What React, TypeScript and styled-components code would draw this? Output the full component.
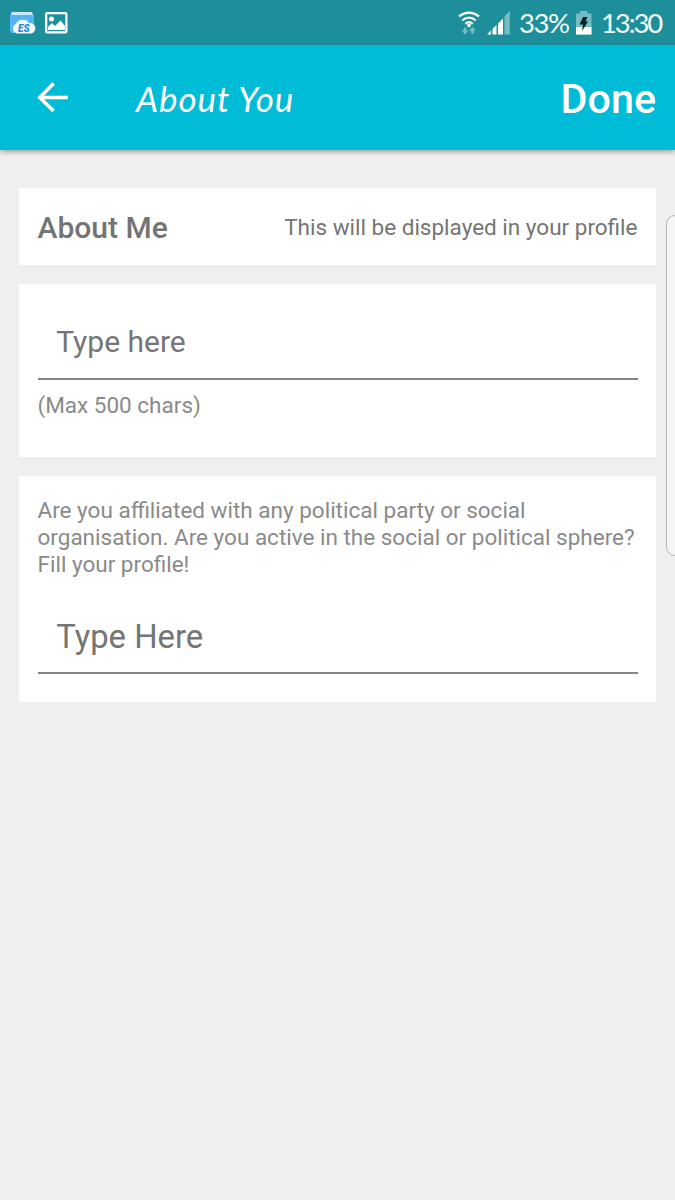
import React from 'react';
import styled, { createGlobalStyle } from 'styled-components';

const GlobalStyle = createGlobalStyle`
  * { box-sizing: border-box; }
  body {
    margin: 0;
    background: #efefef;
    font-family: Roboto, "Liberation Sans", sans-serif;
    overflow: hidden;
  }
`;

const Screen = styled.div`
  position: relative;
  display: flex;
  flex-direction: column;
  width: 675px;
  height: 1200px;
  overflow: hidden;
  background: #efefef;
`;

const StatusBar = styled.header`
  display: flex;
  justify-content: space-between;
  align-items: center;
  height: 45px;
  padding: 0 12px 0 9px;
  background: #1d8f9a;
`;

const StatusGroup = styled.div`
  display: flex;
  align-items: center;
  height: 45px;
`;

const StatusIcon = styled.svg<{ $gap: number }>`
  display: block;
  flex: none;
  margin-right: ${(p) => p.$gap}px;
`;

const StatusText = styled.span<{ $width: number; $spacing: number }>`
  width: ${(p) => p.$width}px;
  padding-top: 1px;
  color: #f4fbfb;
  font-family: Lato, sans-serif;
  font-size: 27.5px;
  line-height: 34px;
  letter-spacing: ${(p) => p.$spacing}px;
  white-space: nowrap;
`;

const AppBar = styled.nav`
  position: relative;
  display: flex;
  align-items: center;
  height: 105px;
  padding: 0 19px 0 36px;
  background: #00bcd7;
  color: #fff;
  box-shadow: 0 2px 5px rgba(0, 0, 0, 0.32);
`;

const BackButton = styled.button`
  display: flex;
  padding: 0 0 3px;
  border: 0;
  background: none;
`;

const Title = styled.h1`
  flex: 1;
  margin: 0 0 0 66px;
  font-family: Lato, sans-serif;
  font-style: italic;
  font-size: 35px;
  font-weight: 400;
  line-height: 44px;
  letter-spacing: 0.9px;
  white-space: nowrap;
`;

const DoneButton = styled.button`
  padding: 3px 0 0;
  border: 0;
  background: none;
  color: #fff;
  font-family: Roboto, sans-serif;
  font-size: 41.25px;
  font-weight: 500;
  line-height: 48px;
`;

const Content = styled.main`
  display: flex;
  flex-direction: column;
  gap: 19px;
  padding: 37.5px 18.75px;
`;

const Card = styled.section<{ $height: number; $top?: number }>`
  height: ${(p) => p.$height}px;
  padding: ${(p) => p.$top ?? 0}px 18.75px 0;
  background: #fff;
`;

const HeadingCard = styled(Card)`
  display: flex;
  justify-content: space-between;
  align-items: center;
  padding-top: 2px;
`;

const Heading = styled.h2`
  margin: 0;
  padding-top: 2px;
  color: #747474;
  font-size: 30px;
  font-weight: 500;
  line-height: 36px;
`;

const Note = styled.p<{ $dark?: boolean }>`
  margin: 0;
  color: ${(p) => (p.$dark ? '#747474' : '#8a8a8a')};
  font-size: 22.5px;
  line-height: 27px;
  white-space: pre-line;
`;

const Hint = styled(Note)`
  margin-top: 12px;
`;

const Field = styled.input<{ $size: number; $offset?: number; $inset?: number }>`
  display: block;
  width: 100%;
  height: 76px;
  margin-top: ${(p) => p.$offset ?? 0}px;
  padding: ${(p) => p.$inset ?? 0}px 18.75px 0;
  border: 0;
  border-bottom: 2px solid #858585;
  border-radius: 0;
  outline: 0;
  background: none;
  font-family: Roboto, sans-serif;
  font-size: ${(p) => p.$size}px;
  &::placeholder { color: #757575; opacity: 1; }
`;

const EdgeHandle = styled.aside`
  position: absolute;
  top: 215px;
  left: 666px;
  width: 20px;
  height: 341px;
  border: 1px solid #b5b5b5;
  border-radius: 9px;
  background: #f5f5f5;
`;

function FilesIcon() {
  return (
    <StatusIcon $gap={9} width="27" height="24" viewBox="0 0 27 24">
      <path d="M1 3Q1 0 4 0H8L10 2H22Q25 2 25 5V20Q25 22 23 22H3Q1 22 1 20Z" fill="#2188dc" />
      <path d="M2 3Q2 1 4 1H23L24 4H2Z" fill="#c9e8f8" />
      <path d="M1 4H25V20Q25 22 23 22H3Q1 22 1 20Z" fill="#54b5f5" />
      <path d="M8 22.5A5 5 0 0 1 7 13A7 6 0 0 1 20 12A5.3 5.3 0 0 1 22 22.5Z" fill="#f3faff" />
      <text x="9" y="21" fill="#2288d8" fontFamily="Roboto" fontSize="10" fontWeight="900" fontStyle="italic">ES</text>
    </StatusIcon>
  );
}

function PictureIcon() {
  return (
    <StatusIcon $gap={0} width="23" height="22" viewBox="0 0 23 22">
      <rect x="1.2" y="1.2" width="20.2" height="19.2" rx="1" fill="none" stroke="#fff" strokeWidth="2.2" />
      <circle cx="6.5" cy="7" r="2.5" fill="#fff" />
      <path d="M3 18V15L7 11L10 14L15.5 8.5L20 14V18Z" fill="#fff" />
    </StatusIcon>
  );
}

function WifiIcon() {
  return (
    <StatusIcon $gap={7} width="22" height="24" viewBox="0 0 22 24">
      <g fill="none" stroke="#fff" strokeWidth="2.2">
        <path d="M1 5.4Q11 -2.2 21 5.4" />
        <path d="M4.3 9.3Q11 3.8 17.7 9.3" />
        <path d="M7.3 12.8Q11 9.6 14.7 12.8" />
      </g>
      <circle cx="11" cy="14.4" r="1.8" fill="#fff" />
      <path d="M5.8 16.5H8.2V19.5H10.5L7 23.5L3.5 19.5H5.8ZM13.3 22.8V19.8H11L14.5 15.8L18 19.8H15.7V22.8Z" fill="#76bdc3" />
    </StatusIcon>
  );
}

function SignalIcon() {
  return (
    <StatusIcon $gap={8} width="24" height="24" viewBox="0 0 24 24">
      <path d="M0 23.5L4 19.5V23.5ZM5.5 18L9.5 14V23.5H5.5ZM11 12.5L16 7.5V23.5H11Z" fill="#fff" />
      <path d="M17.5 5.5L22.8 0V23.5H17.5Z" fill="#76bdc3" />
    </StatusIcon>
  );
}

function BatteryIcon() {
  return (
    <StatusIcon $gap={9} width="16" height="24" viewBox="0 0 16 24">
      <path d="M0 2.5H4V0H11.5V2.5H15.5V23.5H0Z" fill="#76bdc3" />
      <path d="M0 16H15.5V23.5H0Z" fill="#fff" />
      <path d="M7 6H11.5L9.5 10.5H12L6 20L7 13.5H3.5Z" fill="#082327" />
    </StatusIcon>
  );
}

export default function App() {
  return (
    <>
      <GlobalStyle />
      <Screen>
        <StatusBar>
          <StatusGroup>
            <FilesIcon />
            <PictureIcon />
          </StatusGroup>
          <StatusGroup>
            <WifiIcon />
            <SignalIcon />
            <StatusText $width={57} $spacing={-1.4}>33%</StatusText>
            <BatteryIcon />
            <StatusText $width={62} $spacing={-2.1}>13:30</StatusText>
          </StatusGroup>
        </StatusBar>
        <AppBar>
          <BackButton aria-label="Back">
            <svg width="34" height="34" viewBox="0 0 34 34" fill="none" stroke="#fff" strokeWidth="3.6">
              <path d="M31.8 18.5H4.5M17.6 4.5L3.8 18.5L17.6 32" />
            </svg>
          </BackButton>
          <Title>About You</Title>
          <DoneButton>Done</DoneButton>
        </AppBar>
        <Content>
          <HeadingCard $height={77.5}>
            <Heading>About Me</Heading>
            <Note $dark>This will be displayed in your profile</Note>
          </HeadingCard>
          <Card $height={173} $top={20}>
            <Field $size={30} placeholder="Type here" />
            <Hint>(Max 500 chars)</Hint>
          </Card>
          <Card $height={226} $top={21}>
            <Note>{'Are you affiliated with any political party or social\norganisation. Are you active in the social or political sphere?\nFill your profile!'}</Note>
            <Field $size={32.8} $offset={20} $inset={3} placeholder="Type Here" />
          </Card>
        </Content>
        <EdgeHandle />
      </Screen>
    </>
  );
}
